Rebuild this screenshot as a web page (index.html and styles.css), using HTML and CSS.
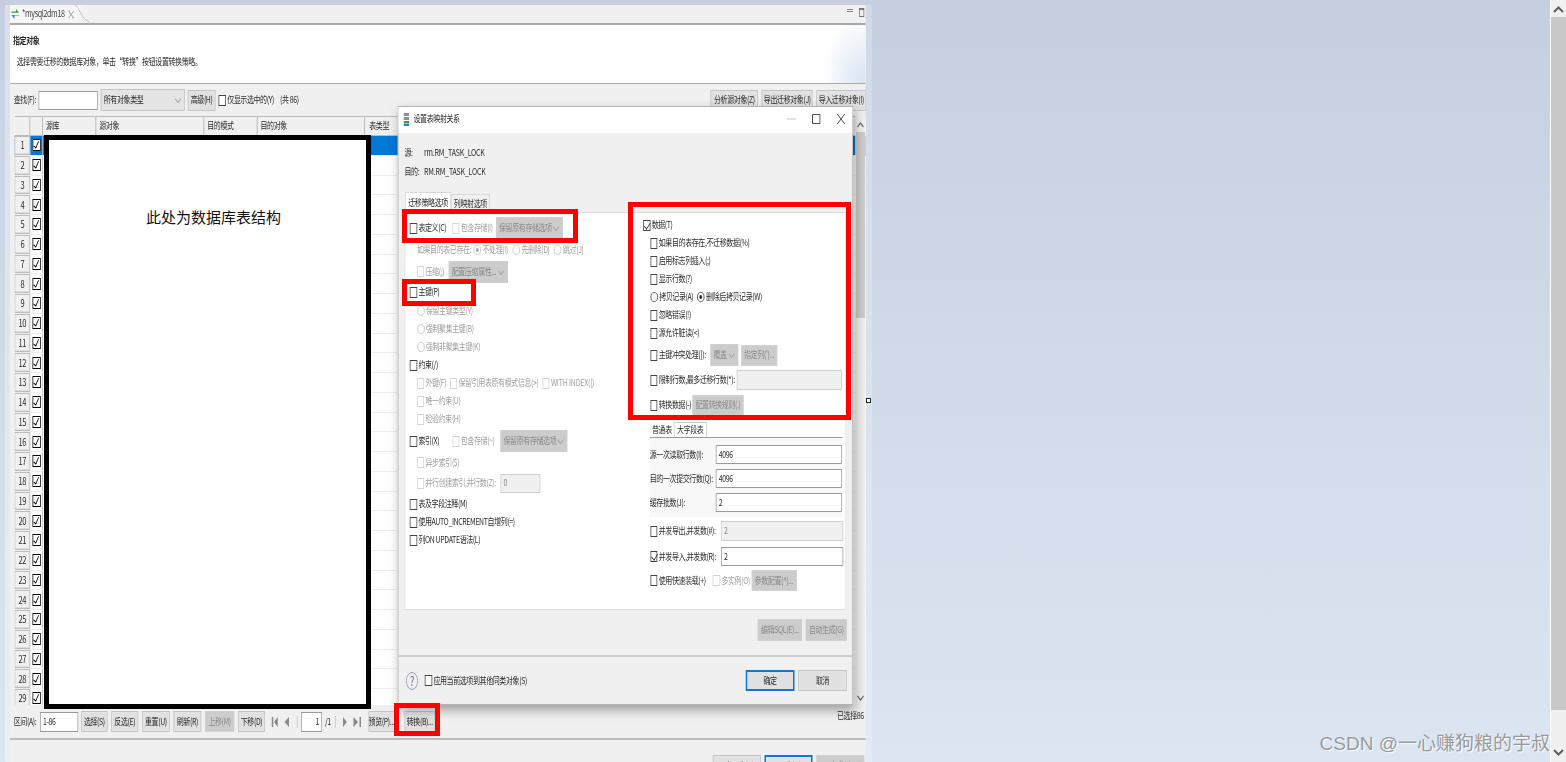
FILE: index.html
```html
<!DOCTYPE html>
<html lang="zh">
<head>
<meta charset="utf-8">
<title>mysql2dm18</title>
<link rel="stylesheet" href="styles.css">
</head>
<body>
<div class="desk">
  <div class="workspace">
    <div class="strip"></div>
    <div class="squish-box">
      <div class="squish">
        <div class="tabbar">
          <div class="tab">
            <svg class="tab-icon" width="12" height="10" viewBox="0 0 12 10"><path d="M1 2.500h6V0l4 3.800H1z" fill="#3a9a3a"/><path d="M11 6.500H5V10L1 6h10z" fill="#2f7fd0"/></svg>
            <span class="tab-name">*mysql2dm18</span>
            <svg class="tab-close" width="9" height="9" viewBox="0 0 9 9"><path d="M1 1l7 7M8 1L1 8M1 1h2M8 8H6" stroke="#999" fill="none"/></svg>
          </div>
          <svg class="tab-curve" width="20" height="18" viewBox="0 0 20 18"><path d="M0 0c6 0 8 14 20 17" stroke="#bbb" fill="none"/></svg>
          <div class="view-ctl"><span class="v-min"></span><span class="v-max"></span></div>
        </div>
        <header class="banner">
          <h1 class="banner-title">指定对象</h1>
          <p class="banner-desc">选择需要迁移的数据库对象，单击“转换”按钮设置转换策略。</p>
        </header>
        <div class="toolbar">
          <span class="find-label">查找(F):</span>
          <span class="field find-input"></span>
          <span class="combo find-type">所有对象类型<i class="chev"></i></span>
          <button class="btn adv">高级(H)</button>
          <span class="ck"></span>
          <span>仅显示选中的(Y)</span>
          <span class="count">(共 86)</span>
          <div class="toolbar-right">
            <button class="btn w63">分析源对象(Z)</button>
            <button class="btn w68">导出迁移对象(J)</button>
            <button class="btn w66">导入迁移对象(I)</button>
          </div>
        </div>
        <div class="table">
          <div class="thead">
            <span class="th c-num"></span><span class="th c-chk"></span><span class="th c-a">源库</span><span class="th c-b">源对象</span><span class="th c-c">目的模式</span><span class="th c-d">目的对象</span><span class="th c-e">表类型</span>
          </div>
          <div class="tbody">
            <div class="row sel"><span class="num">1</span><span class="chk"><i class="tick"></i></span></div>
            <div class="row"><span class="num">2</span><span class="chk"><i class="tick"></i></span></div>
            <div class="row"><span class="num">3</span><span class="chk"><i class="tick"></i></span></div>
            <div class="row"><span class="num">4</span><span class="chk"><i class="tick"></i></span></div>
            <div class="row"><span class="num">5</span><span class="chk"><i class="tick"></i></span></div>
            <div class="row"><span class="num">6</span><span class="chk"><i class="tick"></i></span></div>
            <div class="row"><span class="num">7</span><span class="chk"><i class="tick"></i></span></div>
            <div class="row"><span class="num">8</span><span class="chk"><i class="tick"></i></span></div>
            <div class="row"><span class="num">9</span><span class="chk"><i class="tick"></i></span></div>
            <div class="row"><span class="num">10</span><span class="chk"><i class="tick"></i></span></div>
            <div class="row"><span class="num">11</span><span class="chk"><i class="tick"></i></span></div>
            <div class="row"><span class="num">12</span><span class="chk"><i class="tick"></i></span></div>
            <div class="row"><span class="num">13</span><span class="chk"><i class="tick"></i></span></div>
            <div class="row"><span class="num">14</span><span class="chk"><i class="tick"></i></span></div>
            <div class="row"><span class="num">15</span><span class="chk"><i class="tick"></i></span></div>
            <div class="row"><span class="num">16</span><span class="chk"><i class="tick"></i></span></div>
            <div class="row"><span class="num">17</span><span class="chk"><i class="tick"></i></span></div>
            <div class="row"><span class="num">18</span><span class="chk"><i class="tick"></i></span></div>
            <div class="row"><span class="num">19</span><span class="chk"><i class="tick"></i></span></div>
            <div class="row"><span class="num">20</span><span class="chk"><i class="tick"></i></span></div>
            <div class="row"><span class="num">21</span><span class="chk"><i class="tick"></i></span></div>
            <div class="row"><span class="num">22</span><span class="chk"><i class="tick"></i></span></div>
            <div class="row"><span class="num">23</span><span class="chk"><i class="tick"></i></span></div>
            <div class="row"><span class="num">24</span><span class="chk"><i class="tick"></i></span></div>
            <div class="row"><span class="num">25</span><span class="chk"><i class="tick"></i></span></div>
            <div class="row"><span class="num">26</span><span class="chk"><i class="tick"></i></span></div>
            <div class="row"><span class="num">27</span><span class="chk"><i class="tick"></i></span></div>
            <div class="row"><span class="num">28</span><span class="chk"><i class="tick"></i></span></div>
            <div class="row"><span class="num">29</span><span class="chk"><i class="tick"></i></span></div>
          </div>
          <div class="t-scroll">
            <svg class="arrow" width="10" height="6" viewBox="0 0 10 6"><path d="M1 5l4-4 4 4" stroke="#666" stroke-width="1.4" fill="none"/></svg>
            <span class="t-thumb"></span>
            <svg class="arrow arrow-end" width="10" height="6" viewBox="0 0 10 6"><path d="M1 1l4 4 4-4" stroke="#666" stroke-width="1.4" fill="none"/></svg>
          </div>
        </div>
        <div class="bottombar">
          <span class="range-label">区间(A):</span>
          <span class="field range-input">1-86</span>
          <button class="btn w35">选择(S)</button>
          <button class="btn w36">反选(E)</button>
          <button class="btn w37">重置(U)</button>
          <button class="btn w37">刷新(R)</button>
          <button class="btn btn-off w39">上移(M)</button>
          <button class="btn w36">下移(D)</button>
          <svg class="nav" width="46" height="12" viewBox="0 0 46 12"><path d="M1 1h2v10H1zM9 1v10L4 6zM24 1v10l-6-5z" fill="#888"/><path d="M35 0v12" stroke="#ccc"/></svg>
          <span class="field page-input">1</span>
          <span class="page-total">/1</span>
          <svg class="nav nav-r" width="40" height="12" viewBox="0 0 40 12"><path d="M1 0v12" stroke="#ccc"/><path d="M11 1v10l5-5zM25 1v10l6-5zM33 1h2v10h-2z" fill="#888"/></svg>
          <button class="btn w35">预览(P)...</button>
          <button class="btn w41 convert">转换(B)...</button>
          <span class="sel-count">已选择86</span>
        </div>
        <div class="footer">
          <button class="btn w64">&lt; 上一步(B)</button>
          <button class="btn btn-def w64">下一步(N) &gt;</button>
          <button class="btn btn-off w64">完成(F)</button>
        </div>

        <section class="dialog">
          <div class="dlg-title">
            <svg class="dlg-icon" width="9" height="13" viewBox="0 0 9 13"><path d="M1 0h7v3H1zM1 4h7v3H1z" fill="#8a8f96"/><path d="M1 8h7v2H1z" fill="#3a9a3a"/><path d="M1 10.500h7V13H1z" fill="#2f7fd0"/></svg>
            <span>设置表映射关系</span>
            <div class="win-ctl">
              <svg width="12" height="10" viewBox="0 0 12 10"><path d="M0 5h12" stroke="#bbb"/></svg>
              <svg width="12" height="10" viewBox="0 0 12 10"><path d="M1 .5h10v9H1z" stroke="#333" fill="none"/></svg>
              <svg width="12" height="10" viewBox="0 0 12 10"><path d="M1 0l10 10M11 0L1 10" stroke="#333" fill="none"/></svg>
            </div>
          </div>
          <div class="dlg-info">
            <div class="info-row"><span class="info-key">源:</span><span class="latin">rm.RM_TASK_LOCK</span></div>
            <div class="info-row"><span class="info-key">目的:</span><span class="latin">RM.RM_TASK_LOCK</span></div>
          </div>
          <div class="dlg-tabs"><span class="dtab on">迁移策略选项</span><span class="dtab">列映射选项</span></div>
          <div class="panel">
            <div class="col-left">
              <div class="opt"><span class="ck"></span><span class="l-a">表定义(C)</span><span class="ck dis"></span><span class="off l-b">包含存储(I)</span><span class="combo dis w89">保留原有存储选项<i class="chev"></i></span></div>
              <div class="opt in off"><span class="lead">如果目的表已存在:</span><span class="rd on dis"></span><span class="r-text">不处理(I)</span><span class="rd dis"></span><span class="r-text">先删除(D)</span><span class="rd dis"></span><span>跳过(J)</span></div>
              <div class="opt in"><span class="ck dis"></span><span class="off l-c">压缩(;)</span><span class="combo dis w79">配置压缩属性...<i class="chev"></i></span></div>
              <div class="opt"><span class="ck"></span><span>主键(P)</span></div>
              <div class="opt in off"><span class="rd dis"></span><span>保留主键类型(Y)</span></div>
              <div class="opt in off"><span class="rd dis"></span><span>强制聚集主键(B)</span></div>
              <div class="opt in off"><span class="rd dis"></span><span>强制非聚集主键(K)</span></div>
              <div class="opt"><span class="ck"></span><span>约束(/)</span></div>
              <div class="opt in off"><span class="ck dis"></span><span>外键(F)</span><span class="ck dis ml"></span><span>保留引用表原有模式信息(&gt;)</span><span class="ck dis ml"></span><span class="latin">WITH INDEX(|)</span></div>
              <div class="opt in off"><span class="ck dis"></span><span>唯一约束(U)</span></div>
              <div class="opt in off"><span class="ck dis"></span><span>检验约束(H)</span></div>
              <div class="opt"><span class="ck"></span><span class="l-a">索引(X)</span><span class="ck dis"></span><span class="off l-d">包含存储(~)</span><span class="combo dis w89">保留原有存储选项<i class="chev"></i></span></div>
              <div class="opt in off"><span class="ck dis"></span><span>异步索引($)</span></div>
              <div class="opt in off"><span class="ck dis"></span><span class="l-e">并行创建索引,并行数(Z):</span><span class="field field-off w53">0</span></div>
              <div class="opt"><span class="ck"></span><span>表及字段注释(M)</span></div>
              <div class="opt"><span class="ck"></span><span>使用AUTO_INCREMENT自增列(=)</span></div>
              <div class="opt"><span class="ck"></span><span>列ON UPDATE语法(L)</span></div>
            </div>
            <div class="col-right">
              <div class="opt"><span class="ck on"></span><span>数据(T)</span></div>
              <div class="opt in"><span class="ck"></span><span>如果目的表存在,不迁移数据(%)</span></div>
              <div class="opt in"><span class="ck"></span><span>启用标志列插入(;)</span></div>
              <div class="opt in"><span class="ck"></span><span>显示行数(?)</span></div>
              <div class="opt in"><span class="rd"></span><span>拷贝记录(A)</span><span class="rd on ml"></span><span>删除后拷贝记录(W)</span></div>
              <div class="opt in"><span class="ck"></span><span>忽略错误(!)</span></div>
              <div class="opt in"><span class="ck"></span><span>源允许脏读(&lt;)</span></div>
              <div class="opt in"><span class="ck"></span><span class="l-f">主键冲突处理(]):</span><span class="combo dis w37">覆盖<i class="chev"></i></span><span class="btn btn-off w48 mlb">指定列(')...</span></div>
              <div class="opt in"><span class="ck"></span><span class="l-g">限制行数,最多迁移行数(*):</span><span class="field field-off w140 tall"></span></div>
              <div class="opt in"><span class="ck"></span><span class="l-h">转换数据(-)</span><span class="btn btn-off w68">配置转换规则(.)</span></div>
              <div class="sub-tabs"><span class="stab on">普通表</span><span class="stab">大字段表</span></div>
              <div class="sub-panel">
                <div class="fld-row"><span class="fld-label">源一次读取行数(I):</span><span class="field w168">4096</span></div>
                <div class="fld-row"><span class="fld-label">目的一次提交行数(Q):</span><span class="field w168">4096</span></div>
                <div class="fld-row"><span class="fld-label">缓存批数(J):</span><span class="field w168">2</span></div>
              </div>
              <div class="opt in"><span class="ck"></span><span class="l-i">并发导出,并发数(#):</span><span class="field field-off w163 tall">2</span></div>
              <div class="opt in"><span class="ck on"></span><span class="l-i">并发导入,并发数(R):</span><span class="field w163">2</span></div>
              <div class="opt in"><span class="ck"></span><span class="l-j">使用快速装载(+)</span><span class="ck dis"></span><span class="off l-k">多实例(O)</span><span class="btn btn-off w60">参数配置(^)...</span></div>
            </div>
          </div>
          <div class="dlg-actions">
            <button class="btn btn-off w59">编辑SQL(E)...</button>
            <button class="btn btn-off w55">自动生成(G)</button>
          </div>
          <div class="dlg-foot">
            <span class="help">?</span>
            <span class="ck"></span>
            <span>应用当前选项到其他同类对象(S)</span>
            <div class="dlg-ok">
              <button class="btn btn-def w65">确定</button>
              <button class="btn w65">取消</button>
            </div>
          </div>
        </section>
      </div>
    </div>
    <div class="blackbox"><span class="blackbox-text">此处为数据库表结构</span></div>
    <div class="mark mark-def"></div>
    <div class="mark mark-pk"></div>
    <div class="mark mark-data"></div>
    <div class="mark mark-conv"></div>
    <span class="sash"></span>
    <span class="watermark">CSDN @一心赚狗粮的宇叔</span>
  </div>
  <div class="page-scroll">
    <svg class="arrow" width="11" height="7" viewBox="0 0 11 7"><path d="M1 6l4.500-4.500L10 6" stroke="#606060" stroke-width="2" fill="none"/></svg>
    <span class="page-thumb"></span>
    <svg class="arrow arrow-end" width="11" height="7" viewBox="0 0 11 7"><path d="M1 1l4.500 4.500L10 1" stroke="#606060" stroke-width="2" fill="none"/></svg>
  </div>
</div>
</body>
</html>
```

FILE: styles.css
```css
* { box-sizing: border-box; }
html, body { margin: 0; height: 100%; overflow: hidden; }
body { font-family: "Noto Sans CJK SC", "Liberation Sans", sans-serif; font-size: 9.3px; letter-spacing: -.5px; line-height: 1; color: #2a2a2a; white-space: nowrap; }
button { font: inherit; color: inherit; letter-spacing: inherit; }
.latin { letter-spacing: -.25px; }
.desk { display: flex; width: 1566px; height: 762px; }
.workspace { position: relative; flex: 1; padding-top: 5px; display: flex; background: linear-gradient(180deg, #c5cfe0 0%, #dce6f2 100%); overflow: hidden; }
.strip { width: 10px; flex: none; background: linear-gradient(90deg, transparent 50%, rgba(255,255,255,.35) 50%); }
.squish-box { width: 856px; flex: none; box-shadow: 6px 0 0 rgba(255,255,255,.22); }
.squish { position: relative; width: 1141.4px; height: 757px; transform: scaleX(.75); transform-origin: 0 0; filter: blur(.3px); background: #f0f0f0; display: flex; flex-direction: column; overflow: hidden; }

/* tabs */
.tabbar { height: 20px; flex: none; display: flex; align-items: flex-start; border-bottom: 2px solid #a8a8a8; }
.tab { height: 18px; width: 86px; padding-left: 1px; display: flex; align-items: center; background: #f6f6f6; }
.tab-icon { flex: none; }
.tab-name { margin-left: 3px; font-size: 9.600px; color: #444; width: 56px; }
.tab-close { flex: none; margin-left: 5px; }
.tab-curve { flex: none; background: linear-gradient(90deg, #f6f6f6, #f0f0f0); }
.view-ctl { margin-left: auto; margin-right: 2px; display: flex; gap: 8px; padding-top: 3px; }
.v-min { width: 8px; height: 3px; border: 1px solid #888; margin-top: 1px; }
.v-max { width: 7px; height: 9px; border: 1px solid #777; border-top-width: 2px; }

/* banner */
.banner { height: 59px; flex: none; background: radial-gradient(ellipse 60px 70px at 100% 100%, #d8e2f2 0%, rgba(255,255,255,0) 100%), #fff; border-bottom: 1px solid #aaa; padding: 10px 0 0 4px; }
.banner-title { margin: 0; font-size: 9.300px; line-height: 11px; font-weight: 700; color: #222; }
.banner-desc { margin: 10px 0 0 5px; line-height: 11px; }

/* toolbar */
.toolbar { height: 32px; flex: none; display: flex; align-items: center; padding-left: 5px; }
.find-label { width: 33px; }
.find-input { width: 79px; height: 20px; }
.find-type { width: 112px; margin-left: 4px; margin-right: 4px; height: 22px; }
.adv { width: 37px; margin-right: 4px; }
.count { margin-left: 8px; }
.toolbar-right { margin-left: auto; display: flex; gap: 5px; }
.btn { height: 21px; padding: 0; border: 1px solid #c4c4c4; box-shadow: inset 0 0 0 1px #e4e4e4; background: #e1e1e1; display: inline-flex; align-items: center; justify-content: center; flex: none; }
.btn-off { background: #cccccc; color: #8a8a8a; border-color: #d2d2d2; box-shadow: none; }
.btn-def { border: 2px solid #0a78d4; box-shadow: none; }
.field { display: inline-flex; align-items: center; height: 19px; padding-left: 3px; background: #fff; border: 1px solid #9a9a9a; flex: none; }
.field-off { background: #f0f0f0; color: #888; border-color: #cfcfcf; }
.combo { display: inline-flex; align-items: center; padding-left: 3px; height: 22px; background: #e4e4e4; border: 1px solid #c4c4c4; position: relative; flex: none; }
.combo.dis { background: #cccccc; color: #8a8a8a; border-color: #cfcfcf; }
.chev { position: absolute; right: 5px; top: 6px; width: 6px; height: 6px; border-right: 1px solid #a0a0a0; border-bottom: 1px solid #a0a0a0; transform: rotate(45deg); }
.ck { display: inline-block; position: relative; flex: none; width: 9.500px; height: 11px; margin-right: 2px; border: 1px solid #444; background: #fff; }
.ck.dis { border-color: #d4d4d4; }
.ck.on::after { content: ""; position: absolute; left: 2px; top: 0; width: 4px; height: 7px; border-right: 1px solid #333; border-bottom: 1px solid #333; transform: rotate(40deg); }
.rd { display: inline-block; flex: none; width: 10px; height: 10px; margin-right: 2px; border: 1px solid #555; border-radius: 50%; background: #fff; position: relative; }
.rd.dis { border-color: #c8c8c8; }
.rd.on::after { content: ""; position: absolute; left: 2px; top: 2px; width: 4px; height: 4px; border-radius: 50%; background: #333; }
.rd.on.dis::after { background: #aaa; }
.off { color: #a0a0a0; }

/* table */
.table { position: relative; height: 589px; flex: none; margin-left: 6px; background: #fff; overflow: hidden; }
.thead { height: 20px; display: flex; background: #f0f0f0; border-top: 1px solid #bbb; border-bottom: 1px solid #bbb; }
.th { display: flex; align-items: center; padding-left: 4px; border-right: 1px solid #aaa; flex: none; }
.c-num { width: 21px; }
.c-chk { width: 17px; }
.c-a { width: 71px; }
.c-b { width: 144px; }
.c-c { width: 71px; }
.c-d { width: 143px; }
.c-e { width: 40px; border-right: 0; padding-left: 6px; }
.tbody { display: flex; flex-direction: column; }
.row { height: 19.750px; flex: none; display: flex; align-items: stretch; border-bottom: 1px solid #ededed; }
.num { width: 21px; display: flex; align-items: center; justify-content: center; background: #f0f0f0; border: 1px solid #bdbdbd; font-size: 10px; box-shadow: inset -1px -1px 0 #ddd; }
.chk { width: 17px; display: flex; align-items: center; justify-content: center; border-right: 1px solid #bbb; }
.tick { position: relative; display: block; width: 11px; height: 12px; border: 1.500px solid #000; background: #fff; }
.tick::after { content: ""; position: absolute; left: 2px; top: 0; width: 3px; height: 6.500px; border-right: 1.500px solid #000; border-bottom: 1.500px solid #000; transform: rotate(30deg); }
.row.sel { background: #0078d7; }
.t-scroll { position: absolute; right: 0; top: 0; bottom: 0; width: 14px; background: #f0f0f0; display: flex; flex-direction: column; align-items: center; padding: 6px 0 4px; }
.t-thumb { width: 12px; height: 186px; margin-top: 4px; background: #cdcdcd; }
.arrow { flex: none; }
.arrow-end { margin-top: auto; }

/* bottom bar */
.bottombar { position: relative; height: 35px; flex: none; display: flex; align-items: center; gap: 5px; padding-left: 5px; border-bottom: 2px solid #bcbcbc; }
.range-label { width: 30px; }
.range-input { width: 51px; height: 20px; margin-right: -1px; }
.nav { flex: none; margin-left: 3px; }
.page-input { width: 28px; height: 20px; justify-content: flex-end; padding-right: 3px; margin-left: -11px; }
.page-total { margin-left: -1px; }
.nav-r { margin-left: 0; }
.convert { margin-left: 8px; }
.sel-count { position: absolute; right: 3px; top: 6px; }
.footer { flex: 1; display: flex; justify-content: flex-end; gap: 5px; padding: 15px 2px 0 0; }
.w35 { width: 35px; } .w36 { width: 36px; } .w37 { width: 37px; } .w39 { width: 39px; } .w41 { width: 41px; }
.w48 { width: 48px; } .w53 { width: 53px; } .w55 { width: 55px; } .w59 { width: 59px; } .w60 { width: 60px; }
.w63 { width: 63px; } .w64 { width: 64px; } .w65 { width: 65px; } .w66 { width: 66px; } .w68 { width: 68px; }
.w79 { width: 79px; } .w89 { width: 89px; } .w140 { width: 140px; } .w163 { width: 163px; } .w168 { width: 168px; }

/* dialog */
.dialog { position: absolute; left: 517px; top: 101px; width: 607px; height: 599px; background: #f0f0f0; border: 1px solid #b4b4b4; box-shadow: 3px 5px 12px rgba(0,0,0,.35); display: flex; flex-direction: column; }
.dlg-title { height: 26px; flex: none; background: #fff; display: flex; align-items: center; padding: 0 0 2px 6px; }
.dlg-icon { flex: none; margin-right: 5px; }
.win-ctl { margin-left: auto; margin-right: 9px; display: flex; gap: 21px; }
.dlg-info { padding-top: 10px; height: 59px; flex: none; }
.info-row { height: 19px; display: flex; align-items: center; padding-left: 8px; }
.info-key { width: 26px; }
.dlg-tabs { height: 20px; flex: none; display: flex; align-items: flex-end; padding-left: 9px; }
.dtab { height: 18px; display: flex; align-items: center; padding: 0 3px; border: 1px solid #d8d8d8; border-bottom: 0; }
.dtab.on { height: 20px; background: #fff; }
.panel { height: 398px; flex: none; margin-left: 8px; width: 589px; background: #fff; border: 1px solid #dcdcdc; display: flex; padding-left: 6px; }
.col-left { width: 311px; flex: none; padding-top: 4px; display: grid; grid-template-rows: 22px 22px 21px 20px 18px 18px 18px 18px 18px 18px 18px 26px 17px 24px 18px 18px 18px; align-content: start; }
.col-right { flex: 1; padding-top: 3px; display: grid; grid-template-rows: 18px 18px 18px 18px 18px 18px 18px 26px 24px 26px 20px 79px 28px 23px 25px; align-content: start; }
.opt { display: flex; align-items: center; }
.col-left .in { padding-left: 9.500px; }
.col-right .in { padding-left: 9.500px; }
.lead { margin-right: 3px; }
.r-text { margin-right: 6px; }
.ml { margin-left: 5px; }
.mlb { margin-left: 4px; }
.l-a { width: 45px; }
.l-b { width: 47px; }
.l-c { width: 31px; }
.l-d { width: 53px; }
.l-e { width: 100px; }
.l-f { width: 69px; }
.l-g { width: 104px; }
.l-h { width: 45px; }
.l-i { width: 83px; }
.l-j { width: 72px; }
.l-k { width: 40px; }
.tall { height: 20px; }
.sub-tabs { display: flex; align-items: flex-end; margin-left: 9px; border-bottom: 1px solid #999; width: 257px; }
.stab { height: 15px; display: flex; align-items: center; padding: 0 3px; }
.stab + .stab { border: 1px solid #ccc; border-bottom: 0; }
.sub-panel { margin-left: 9px; width: 257px; padding-top: 7px; background: #f8f8f8; display: flex; flex-direction: column; gap: 5px; }
.fld-row { height: 19px; display: flex; align-items: center; }
.fld-label { width: 88px; flex: none; }
.dlg-actions { height: 45px; flex: none; display: flex; gap: 5px; justify-content: flex-end; padding: 9px 7px 0 0; }
.dlg-actions .btn { height: 22px; }
.dlg-foot { flex: 1; display: flex; align-items: center; padding-left: 10px; border-top: 2px solid #d0d0d0; }
.help { flex: none; width: 16px; height: 18px; margin-right: 9px; border: 1.500px solid #8b9cb6; border-radius: 50%; display: flex; align-items: center; justify-content: center; color: #5f7393; font-size: 13px; }
.dlg-ok { margin-left: auto; margin-right: 7px; display: flex; gap: 5px; }

/* overlays */
.blackbox { position: absolute; left: 44px; top: 135px; width: 327px; height: 574px; border: 5px solid #000; background: #fff; }
.blackbox-text { position: absolute; left: 97px; top: 68px; font-size: 15px; letter-spacing: 0; line-height: 18px; color: #111; }
.mark { position: absolute; border: 5px solid #f00; }
.mark-def { left: 402px; top: 209px; width: 176px; height: 34px; }
.mark-pk { left: 402px; top: 279px; width: 74px; height: 27px; }
.mark-data { left: 628px; top: 202px; width: 223px; height: 218px; }
.mark-conv { left: 394px; top: 703px; width: 46px; height: 33px; }
.sash { position: absolute; left: 866px; top: 398px; width: 5px; height: 5px; background: #fff; border: 1px solid #222; }
.watermark { position: absolute; right: 0; top: 733px; font-family: "Liberation Sans", "Noto Sans CJK SC", sans-serif; font-size: 19px; letter-spacing: 0; line-height: 21px; color: #9a9a9a; text-shadow: 1px 1px 1px #fff; }

/* page scrollbar */
.page-scroll { width: 16px; flex: none; background: #f0f0f0; display: flex; flex-direction: column; align-items: center; padding: 6px 0 6px; border-left: 1px solid #fff; }
.page-thumb { width: 15px; height: 693px; margin-top: 4px; background: #c8c8c8; flex: none; }
```
